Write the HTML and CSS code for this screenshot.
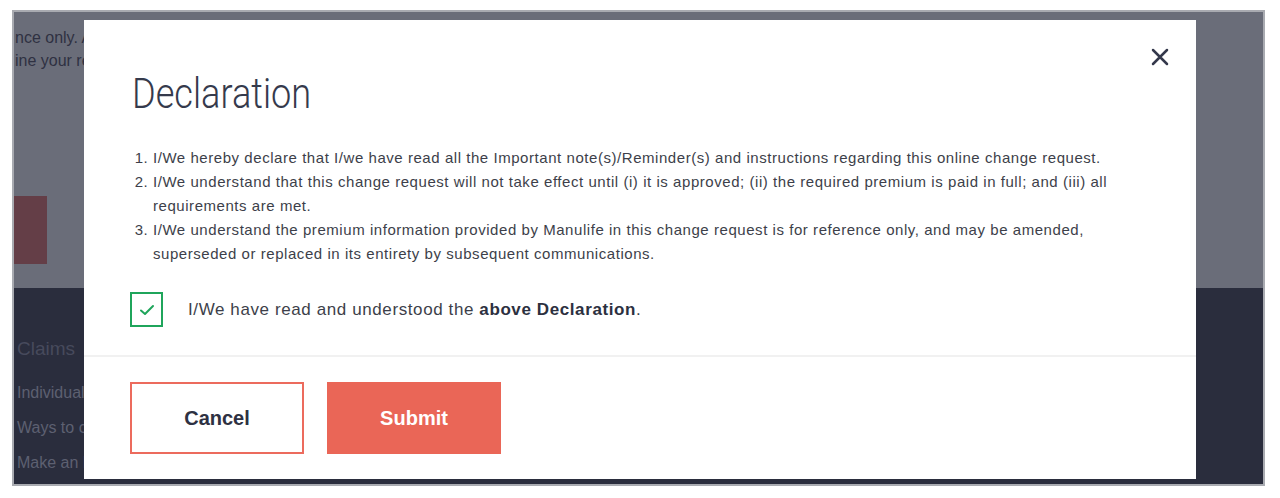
FILE: index.html
```html
<!DOCTYPE html>
<html lang="en">
<head>
    <meta charset="UTF-8">
    <meta name="viewport" content="width=device-width, initial-scale=1.0">
    <title>Declaration</title>
    <link rel="stylesheet" href="styles.css">
</head>
<body>

<div class="frame">
    <div class="page-top">
        <p class="bg-line">nce only. All figures are for reference only.</p>
        <p class="bg-line">ine your request before submitting.</p>
        <div class="bg-button"></div>
    </div>
    <div class="page-footer">
        <p class="footer-title">Claims</p>
        <p class="footer-link">Individual claims</p>
        <p class="footer-link">Ways to claim</p>
        <p class="footer-link">Make an Enquiry</p>
    </div>

    <div class="modal">
        <button class="close" aria-label="Close">
            <svg width="18" height="18" viewBox="0 0 18 18">
                <path d="M2 2 L16 16 M16 2 L2 16" stroke="#34384b" stroke-width="2.5" stroke-linecap="round"/>
            </svg>
        </button>

        <div class="modal-body">
            <h1 class="title">Declaration</h1>
            <ol class="terms">
                <li>I/We hereby declare that I/we have read all the Important note(s)/Reminder(s) and instructions regarding this online change request.</li>
                <li>I/We understand that this change request will not take effect until (i) it is approved; (ii) the required premium is paid in full; and (iii) all requirements are met.</li>
                <li>I/We understand the premium information provided by Manulife in this change request is for reference only, and may be amended, superseded or replaced in its entirety by subsequent communications.</li>
            </ol>
            <label class="agree">
                <span class="checkbox">
                    <svg width="16" height="12" viewBox="0 0 16 12">
                        <path d="M2 6.5 L6 10 L14 2" fill="none" stroke="#1fa55b" stroke-width="2" stroke-linecap="round" stroke-linejoin="round"/>
                    </svg>
                </span>
                <span>I/We have read and understood the <strong>above Declaration</strong>.</span>
            </label>
        </div>

        <div class="modal-actions">
            <button class="btn btn-outline">Cancel</button>
            <button class="btn btn-primary">Submit</button>
        </div>
    </div>
</div>

</body>
</html>
```

FILE: styles.css
```css
body {
    margin: 0;
    background-color: #fff;
    font-family: "Liberation Sans", Arial, sans-serif;
}
.frame {
    position: relative;
    margin: 10px 0 0 12px;
    width: 1249px;
    border: 2px solid #a9abb1;
    overflow: hidden;
}
.page-top {
    height: 276px;
    background: #6a6d79;
    padding-top: 17px;
    box-sizing: border-box;
}
.bg-line {
    margin: 0 0 5px 1px;
    font-size: 16px;
    line-height: 18px;
    color: #2f3142;
}
.bg-button {
    width: 33px;
    height: 68px;
    margin-top: 126px;
    background: #643e47;
}
.page-footer {
    height: 196px;
    background: #2a2d3d;
    padding: 50px 0 0 3px;
    box-sizing: border-box;
}
.footer-title {
    margin: 0 0 22px;
    font-size: 19px;
    color: #474a5c;
}
.footer-link {
    margin: 0 0 13px;
    font-size: 16px;
    line-height: 22px;
    color: #5d6071;
}
.modal {
    position: absolute;
    left: 70px;
    top: 8px;
    width: 1112px;
    height: 459px;
    background: #fff;
}
.close {
    position: absolute;
    top: 28px;
    right: 27px;
    border: 0;
    background: none;
    padding: 0;
    cursor: pointer;
}
.modal-body {
    padding: 48px 48px 0;
}
.title {
    display: inline-block;
    margin: 0 0 26px;
    font-family: Roboto, "Liberation Sans", sans-serif;
    font-weight: 300;
    font-size: 42px;
    line-height: 52px;
    color: #353a4c;
    transform: scaleX(0.86);
    transform-origin: left center;
}
.terms {
    margin: 0;
    padding-left: 21px;
    font-size: 15px;
    line-height: 24px;
    letter-spacing: 0.55px;
    color: #3d3f4a;
}
.agree {
    display: flex;
    align-items: center;
    gap: 25px;
    margin: 26px 0 0 -2px;
    font-size: 17px;
    letter-spacing: 0.6px;
    color: #3d3f4a;
}
.agree strong {
    color: #2c3040;
}
.checkbox {
    width: 29px;
    height: 31px;
    border: 2px solid #1fa55b;
    display: flex;
    align-items: center;
    justify-content: center;
}
.modal-actions {
    margin-top: 28px;
    border-top: 2px solid #f1f1f1;
    padding: 25px 48px 0 46px;
    display: flex;
    gap: 23px;
}
.btn {
    width: 174px;
    height: 72px;
    font-family: "Liberation Sans", Arial, sans-serif;
    font-size: 20px;
    font-weight: bold;
    cursor: pointer;
}
.btn-outline {
    background: #fff;
    border: 2px solid #ec6b5d;
    color: #2e3142;
}
.btn-primary {
    background: #ea6657;
    border: 0;
    color: #fff;
}
```
